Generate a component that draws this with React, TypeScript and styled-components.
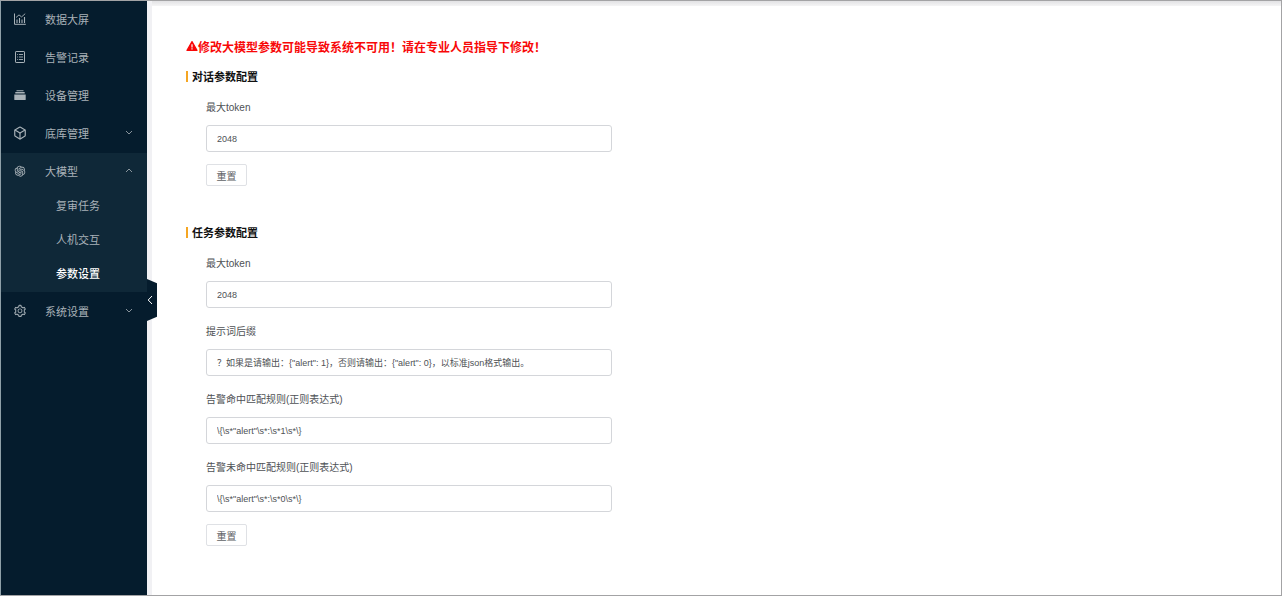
import React, { useState } from "react";
import styled, { createGlobalStyle } from "styled-components";
import { AiOutlineOpenAI, AiOutlineSetting } from "react-icons/ai";
import { Box } from "lucide-react";

const GlobalStyle = createGlobalStyle`
  *, *::before, *::after { box-sizing: border-box; }
  body {
    margin: 0;
    background: #fff;
    font-family: "Liberation Sans", "Noto Sans CJK SC", sans-serif;
  }
`;

const Page = styled.div`
  display: flex;
  min-height: 100vh;
  border: 1px solid #a3a3a5;
  border-left-color: #8fa0a8;
`;

const Sidebar = styled.nav`
  position: relative;
  flex: none;
  width: 146px;
  background: #051c2d;
  padding-bottom: 16px;
`;

const MenuList = styled.ul`
  display: flex;
  flex-direction: column;
  gap: 1px;
  list-style: none;
  margin: 0;
  padding: 0;
`;

const SubMenu = styled.ul`
  list-style: none;
  margin: 0;
  padding: 0;
`;

const MenuGroup = styled.li<{ $open?: boolean }>`
  background: ${(p) => (p.$open ? "#0f2838" : "transparent")};
`;

const MenuLink = styled.a`
  display: flex;
  align-items: center;
  width: 100%;
  height: 37px;
  padding: 0 14px 2px 12px;
  border: 0;
  background: none;
  color: #a9b2b8;
  font: inherit;
  font-size: 11px;
  text-align: left;
  text-decoration: none;
  cursor: pointer;

  > svg:first-child {
    flex: none;
    margin-right: 18px;
  }
`;

const MenuText = styled.span`
  flex: 1;
`;

const SubLink = styled.a<{ $active?: boolean }>`
  display: flex;
  align-items: center;
  height: 34px;
  padding: 0 0 4px 55px;
  font-size: 11px;
  text-decoration: none;
  color: ${(p) => (p.$active ? "#fff" : "#a9b2b8")};
  font-weight: ${(p) => (p.$active ? 500 : 400)};
`;

const CollapseButton = styled.button`
  position: absolute;
  left: 100%;
  top: 278px;
  display: flex;
  align-items: center;
  justify-content: center;
  width: 10px;
  height: 42px;
  padding: 0 4px 0 0;
  border: 0;
  background: #051c2d;
  color: #fff;
  clip-path: polygon(0 0, 100% 10%, 100% 90%, 0 100%);
  cursor: pointer;
`;

const Content = styled.main`
  flex: 1;
  min-width: 0;
  padding: 35px 34px 16px;
  border-left: 5px solid #f1f1f4;
  background: linear-gradient(#e2e2e4, #f5f5f6 5px, #fff 5px) no-repeat;
`;

const Warning = styled.p`
  display: flex;
  align-items: center;
  margin: 0;
  height: 20px;
  color: #f80808;
  font-size: 12px;
  font-weight: 700;
`;

const Section = styled.section`
  padding-top: 11px;
  margin-bottom: 26px;

  &:last-child {
    margin-bottom: 0;
  }
`;

const SectionTitle = styled.h2`
  display: flex;
  align-items: center;
  gap: 4px;
  margin: 0;
  height: 18px;
  color: #111;
  font-size: 11px;
  font-weight: 700;

  &::before {
    content: "";
    width: 2px;
    height: 11px;
    background: #f5a623;
  }
`;

const Form = styled.form`
  max-width: 426px;
  padding: 11px 0 0 20px;
`;

const Field = styled.div`
  display: flex;
  flex-direction: column;
  margin-bottom: 12px;
`;

const Label = styled.label`
  height: 29px;
  line-height: 24px;
  color: #4e5155;
  font-size: 10px;
`;

const TextInput = styled.input`
  width: 100%;
  height: 27px;
  padding: 0 10px;
  border: 1px solid #d4d6da;
  border-radius: 3px;
  background: #fff;
  color: #4e5155;
  font: inherit;
  font-size: 9px;
  outline: none;
`;

const ResetButton = styled.button`
  display: block;
  width: 41px;
  height: 22px;
  padding: 0;
  border: 1px solid #dfe1e5;
  border-radius: 2px;
  background: #fff;
  color: #606266;
  font: inherit;
  font-size: 10px;
  cursor: pointer;
`;

const ChartIcon = () => (
  <svg width="14" height="14" viewBox="0 0 14 14" fill="none" stroke="currentColor" aria-hidden="true">
    <path d="M1.5 1.5v10.8h11.3" />
    <path d="M4 11V7.5M6.5 11V6M9 11V7.5M11.5 11V5" strokeWidth="1.1" />
    <path d="M3 5.5l3-2.6 2.6 2 3.6-3.2" strokeWidth=".9" />
  </svg>
);

const RecordIcon = () => (
  <svg width="14" height="14" viewBox="0 0 14 14" fill="none" stroke="currentColor" aria-hidden="true">
    <rect x="2.5" y="1.5" width="9" height="11" rx=".6" />
    <path d="M6 4.5h4M6 7h4M6 9.5h4M4.2 4.5h.9M4.2 7h.9M4.2 9.5h.9" strokeWidth=".9" />
  </svg>
);

const DeviceIcon = () => (
  <svg width="14" height="14" viewBox="0 0 14 14" fill="currentColor" aria-hidden="true">
    <path d="M3.5 2.2h7v1h-7zM2.3 4.1h9.4v1.3H2.3z" />
    <path d="M1.3 6.4h11.4v5.1a.6.6 0 0 1-.6.6H1.9a.6.6 0 0 1-.6-.6z" />
  </svg>
);

const Chevron = ({ up }: { up?: boolean }) => (
  <svg width="8" height="8" viewBox="0 0 8 8" fill="none" stroke="currentColor" strokeWidth=".8" aria-hidden="true">
    <path d={up ? "M1 5l3-3 3 3" : "M1 2l3 3 3-3"} />
  </svg>
);

const WarningIcon = () => (
  <svg width="12" height="12" viewBox="0 0 12 12" aria-hidden="true">
    <path d="M6 1.6 11 10.4H1z" fill="currentColor" stroke="currentColor" strokeWidth="1.2" strokeLinejoin="round" />
    <path d="M6 4.2v3.2M6 8.3v1.2" stroke="#fff" strokeWidth="1.2" />
  </svg>
);

type Setting = { id: string; label: string; value: string };

const chatSettings: Setting[] = [{ id: "chat-token", label: "最大token", value: "2048" }];

const taskSettings: Setting[] = [
  { id: "task-token", label: "最大token", value: "2048" },
  { id: "task-suffix", label: "提示词后缀", value: '？如果是请输出：{"alert": 1}，否则请输出：{"alert": 0}，以标准json格式输出。' },
  { id: "task-hit", label: "告警命中匹配规则(正则表达式)", value: '\\{\\s*"alert"\\s*:\\s*1\\s*\\}' },
  { id: "task-miss", label: "告警未命中匹配规则(正则表达式)", value: '\\{\\s*"alert"\\s*:\\s*0\\s*\\}' },
];

function SettingsSection({ title, settings }: { title: string; settings: Setting[] }) {
  return (
    <Section>
      <SectionTitle>{title}</SectionTitle>
      <Form>
        {settings.map((s) => (
          <Field key={s.id}>
            <Label htmlFor={s.id}>{s.label}</Label>
            <TextInput id={s.id} type="text" defaultValue={s.value} />
          </Field>
        ))}
        <ResetButton type="reset">重置</ResetButton>
      </Form>
    </Section>
  );
}

export default function App() {
  const [modelOpen, setModelOpen] = useState(true);
  return (
    <>
      <GlobalStyle />
      <Page lang="zh-CN">
        <Sidebar>
          <MenuList>
            <li><MenuLink href="#screen"><ChartIcon /><MenuText>数据大屏</MenuText></MenuLink></li>
            <li><MenuLink href="#records"><RecordIcon /><MenuText>告警记录</MenuText></MenuLink></li>
            <li><MenuLink href="#devices"><DeviceIcon /><MenuText>设备管理</MenuText></MenuLink></li>
            <li>
              <MenuLink as="button" type="button">
                <Box size={14} strokeWidth={2} /><MenuText>底库管理</MenuText><Chevron />
              </MenuLink>
            </li>
            <MenuGroup $open={modelOpen}>
              <MenuLink as="button" type="button" aria-expanded={modelOpen} onClick={() => setModelOpen(!modelOpen)}>
                <AiOutlineOpenAI size={14} /><MenuText>大模型</MenuText><Chevron up={modelOpen} />
              </MenuLink>
              {modelOpen && (
                <SubMenu>
                  <li><SubLink href="#review">复审任务</SubLink></li>
                  <li><SubLink href="#chat">人机交互</SubLink></li>
                  <li><SubLink href="#params" $active aria-current="page">参数设置</SubLink></li>
                </SubMenu>
              )}
            </MenuGroup>
            <li>
              <MenuLink as="button" type="button">
                <AiOutlineSetting size={14} /><MenuText>系统设置</MenuText><Chevron />
              </MenuLink>
            </li>
          </MenuList>
          <CollapseButton type="button" aria-label="收起菜单">
            <svg width="6" height="10" viewBox="0 0 6 10" fill="none" stroke="currentColor" aria-hidden="true">
              <path d="M5 1L1.2 5 5 9" />
            </svg>
          </CollapseButton>
        </Sidebar>
        <Content>
          <Warning><WarningIcon />修改大模型参数可能导致系统不可用！请在专业人员指导下修改！</Warning>
          <SettingsSection title="对话参数配置" settings={chatSettings} />
          <SettingsSection title="任务参数配置" settings={taskSettings} />
        </Content>
      </Page>
    </>
  );
}
